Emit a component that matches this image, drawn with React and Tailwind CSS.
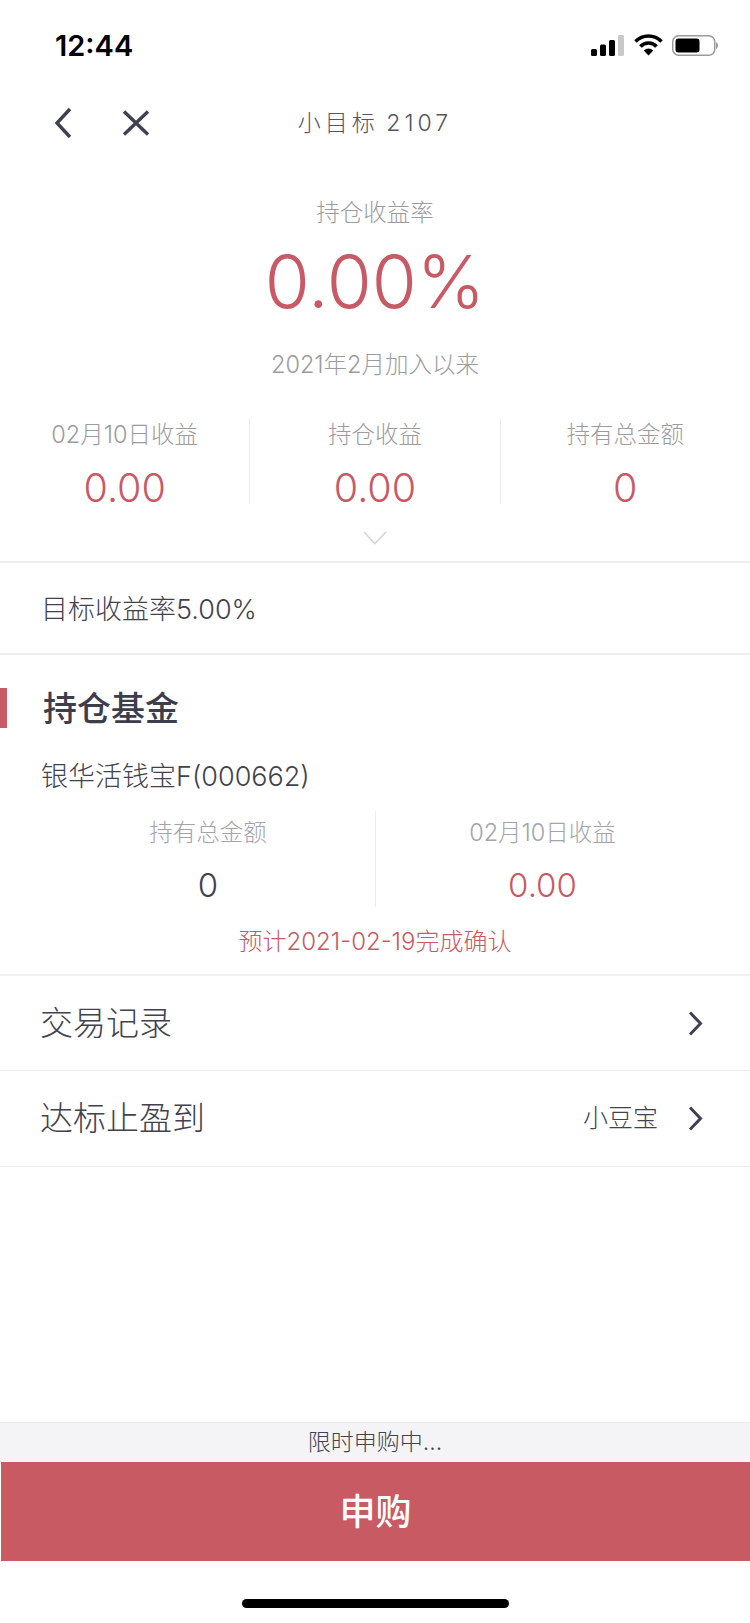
import React from 'react';

const font = { fontFamily: '"Inter", "Noto Sans CJK SC", sans-serif' };

const StatusBar = () => (
  <div className="h-[90px] flex items-center justify-between pl-[55px] pr-[32px]">
    <span className="text-[29px] font-semibold text-black font-['Inter'] leading-none">12:44</span>
    <div className="flex items-center">
      <svg width="33" height="21" viewBox="0 0 33 21" className="mr-[10px]">
        <rect x="0" y="14" width="6" height="7" rx="1.5" fill="#000" />
        <rect x="9" y="9.5" width="6" height="11.5" rx="1.5" fill="#000" />
        <rect x="18" y="5" width="6" height="16" rx="1.5" fill="#000" />
        <rect x="27" y="0" width="6" height="21" rx="1.5" fill="#c9c9c9" />
      </svg>
      <svg width="29" height="22" viewBox="0 0 29 22" className="mr-[9px]">
        <path d="M1.5 7.5 A18 18 0 0 1 27.5 7.5" fill="none" stroke="#000" strokeWidth="3.6" />
        <path d="M6.5 12.5 A11 11 0 0 1 22.5 12.5" fill="none" stroke="#000" strokeWidth="3.6" />
        <path d="M14.5 21.5 L9.8 16.4 A6.6 6.6 0 0 1 19.2 16.4 Z" fill="#000" />
      </svg>
      <svg width="46" height="21" viewBox="0 0 46 21">
        <rect x="0.75" y="0.75" width="42" height="19.5" rx="6" fill="none" stroke="#9a9a9a" strokeWidth="1.5" />
        <rect x="3.5" y="3.5" width="24" height="14" rx="3" fill="#000" />
        <path d="M44 7 C45 7.5 46 9 46 10.5 C46 12 45 13.5 44 14 Z" fill="#9a9a9a" />
      </svg>
    </div>
  </div>
);

const NavBar = () => (
  <div className="relative h-[64px] flex items-center pt-[2px]">
    <svg width="20" height="32" viewBox="0 0 20 32" className="ml-[53px]">
      <path d="M17 2 L4 16 L17 30" fill="none" stroke="#3f4052" strokeWidth="3.4" />
    </svg>
    <svg width="28" height="26" viewBox="0 0 28 26" className="ml-[49px]">
      <path d="M2 1.5 L26 24.5 M26 1.5 L2 24.5" fill="none" stroke="#3f4052" strokeWidth="3.4" />
    </svg>
    <div className="absolute left-0 right-0 top-[2px] bottom-0 flex items-center justify-center text-[23px] text-[#55555f] font-light tracking-[4px] [word-spacing:-3px]">
      小目标 2107
    </div>
  </div>
);

const Stat = ({ label, value, border }) => (
  <div className={`flex-1 h-[86px] flex flex-col items-center ${border ? 'border-r border-[#ececee]' : ''}`}>
    <div className="text-[23.5px] leading-[34px] text-[#9c9c9f] font-light">{label}</div>
    <div className="text-[39.5px] leading-[32px] mt-[20px] text-[#c85a65] font-light">{value}</div>
  </div>
);

const Row = ({ label, extra, h }) => (
  <div className={`${h} flex items-center pl-[40px] pr-[47px] border-b border-[#ececee]`}>
    <span className="text-[33px] text-[#42424e] font-light leading-none">{label}</span>
    <span className="flex-1" />
    {extra && <span className="text-[25px] text-[#42424e] font-light mr-[30px]">{extra}</span>}
    <svg width="15" height="25" viewBox="0 0 15 25">
      <path d="M2 1.5 L12.5 12.5 L2 23.5" fill="none" stroke="#3f4052" strokeWidth="3" />
    </svg>
  </div>
);

const App = () => {
  return (
    <div style={font} className="w-[750px] h-[1623px] bg-white flex flex-col overflow-hidden">
      <StatusBar />
      <NavBar />

      <div className="h-[409px] flex flex-col items-center border-b-2 border-[#eeeef0]">
        <div className="mt-[37px] text-[23.5px] leading-[44px] text-[#9c9c9f] font-light">持仓收益率</div>
        <div className="mt-[1px] text-[73px] leading-[92px] text-[#c85a65] font-[350]">0.00%</div>
        <div className="mt-[19px] text-[23.5px] leading-[36px] text-[#9c9c9f] font-light">2021年2月加入以来</div>
        <div className="mt-[35px] w-full flex">
          <Stat label="02月10日收益" value="0.00" border />
          <Stat label="持仓收益" value="0.00" border />
          <Stat label="持有总金额" value="0" />
        </div>
        <svg width="24" height="14" viewBox="0 0 24 14" className="mt-[27px]">
          <path d="M1 1 L12 12.5 L23 1" fill="none" stroke="#d3d4dc" strokeWidth="1.6" />
        </svg>
      </div>

      <div className="h-[92px] flex items-center pl-[41px] pt-[4px] border-b-2 border-[#eeeef0] text-[27px] text-[#42424e] font-light">
        目标收益率5.00%
      </div>

      <div className="h-[321px] flex flex-col border-b-2 border-[#f0f0f2]">
        <div className="mt-[33px] h-[40px] flex items-center border-l-[7px] border-[#c85a65] pl-[36px] text-[34px] font-medium text-[#3d3d4b]">
          持仓基金
        </div>
        <div className="mt-[29px] pl-[41px] text-[27px] leading-[40px] text-[#42424e] font-light">银华活钱宝F(000662)</div>
        <div className="mt-[14px] flex h-[96px]">
          <div className="w-[376px] border-r border-[#ececee] flex flex-col items-center pl-[41px]">
            <div className="mt-[5px] text-[23.5px] leading-[34px] text-[#a3a3ac] font-light">持有总金额</div>
            <div className="mt-[13px] text-[33px] leading-[44px] text-[#42424e] font-light">0</div>
          </div>
          <div className="flex-1 flex flex-col items-center pr-[41px]">
            <div className="mt-[5px] text-[23.5px] leading-[34px] text-[#a3a3ac] font-light">02月10日收益</div>
            <div className="mt-[13px] text-[33px] leading-[44px] text-[#c85a65] font-light">0.00</div>
          </div>
        </div>
        <div className="mt-[18px] text-center text-[24px] leading-[34px] text-[#c85a65] font-light">预计2021-02-19完成确认</div>
      </div>

      <Row label="交易记录" h="h-[95px]" />
      <Row label="达标止盈到" extra="小豆宝" h="h-[96px]" />

      <div className="flex-1" />

      <div className="h-[40px] bg-[#f4f4f6] border-t border-[#e8e8ea] flex items-center justify-center text-[23px] text-[#42424e] font-light">
        限时申购中...
      </div>
      <div className="h-[99px] ml-[1px] bg-[#c85a64] flex items-center justify-center text-[36px] font-medium text-white">
        申购
      </div>
      <div className="h-[62px] flex justify-center">
        <div className="mt-[38px] w-[267px] h-[9px] rounded-full bg-black" />
      </div>
    </div>
  );
};

export default App;
